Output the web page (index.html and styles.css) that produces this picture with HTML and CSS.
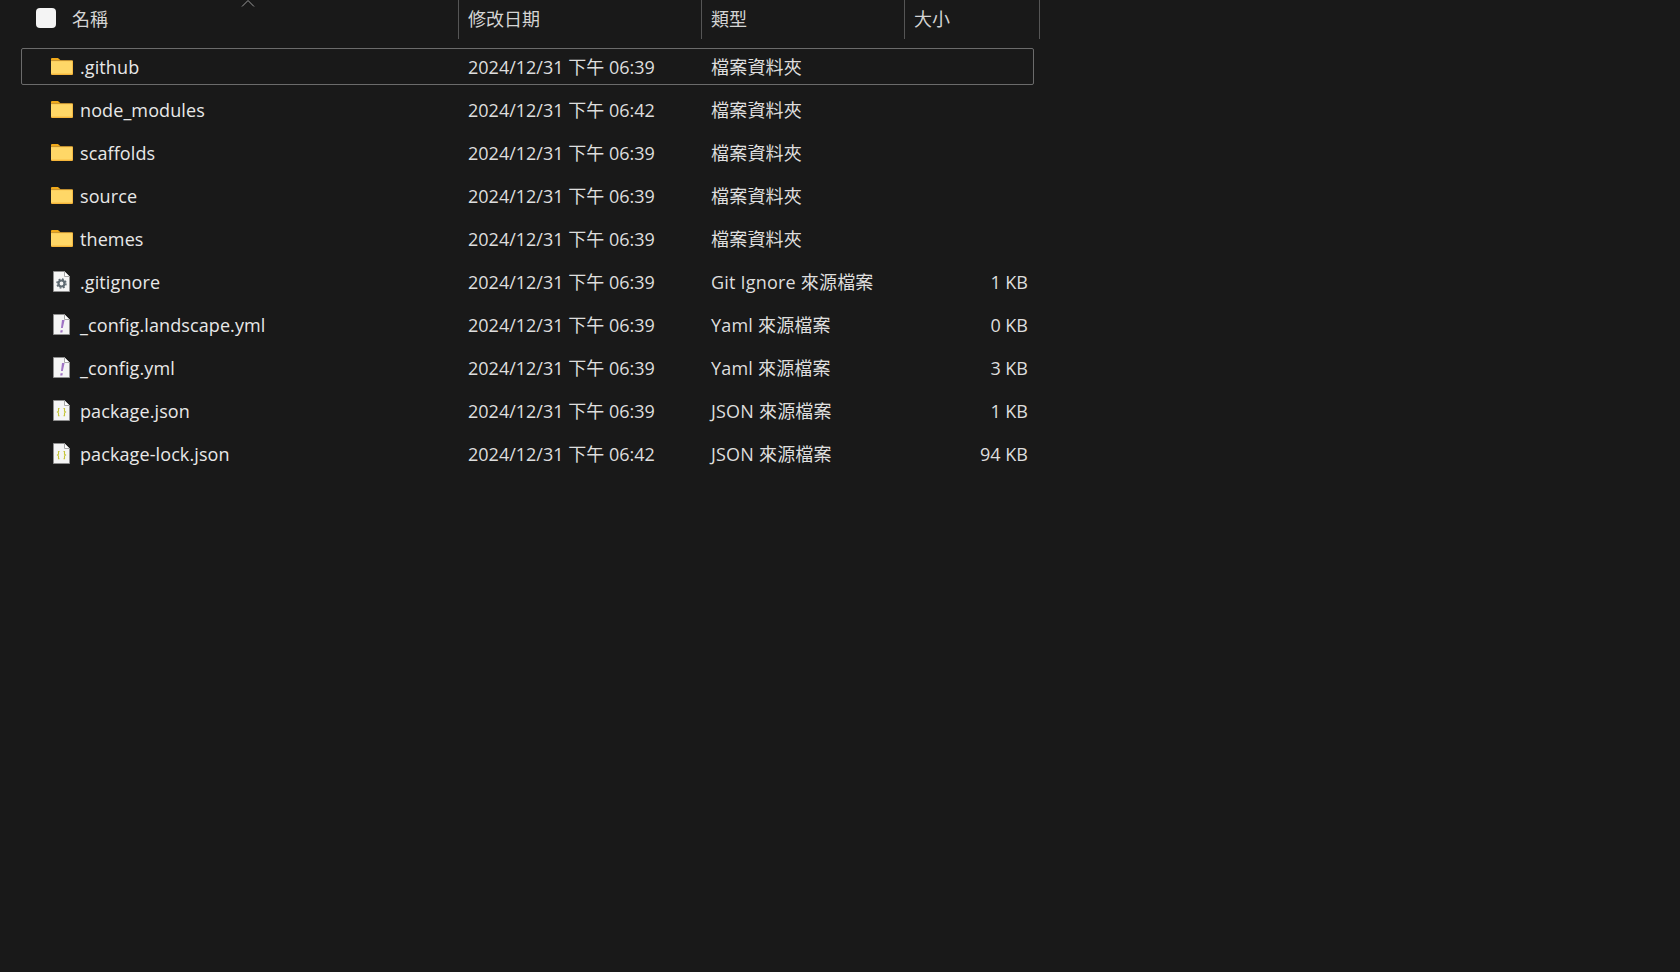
FILE: index.html
```html
<!DOCTYPE html>
<html lang="zh-Hant">
<head>
<meta charset="utf-8">
<title>檔案總管</title>
<link rel="stylesheet" href="styles.css">
</head>
<body>
<svg class="defs" width="0" height="0" aria-hidden="true">
  <symbol id="folder" viewBox="0 0 22 18">
    <path d="M0 2a1 1 0 0 1 1-1h6l2.500 2.200H0z" fill="#f0a91a"/>
    <path d="M0 3.200h21a1 1 0 0 1 1 1V17a1 1 0 0 1-1 1H1a1 1 0 0 1-1-1z" fill="#f5b53a"/>
    <path d="M0 4.200h21.200V16.600H0z" fill="#ffd767"/>
  </symbol>
  <symbol id="page" viewBox="0 0 17 21">
    <path d="M.5.500h11l5 5v15H.5z" fill="#f5f5f5" stroke="#8f8f8f"/>
    <path d="M11.500.500v5h5" fill="#fff" stroke="#a8a8a8"/>
  </symbol>
</svg>
<main class="explorer">
  <header class="head">
    <svg class="sort" width="14" height="7" viewBox="0 0 14 7"><path d="M1 6.500l6-6 6 6" fill="none" stroke="#9a9a9a"/></svg>
    <div class="hcell hname"><span class="check"></span><span>名稱</span></div>
    <div class="hcell">修改日期</div>
    <div class="hcell">類型</div>
    <div class="hcell">大小</div>
  </header>
  <ul class="list">
    <li class="row selected">
      <span class="name"><svg class="ico"><use href="#folder"/></svg>.github</span>
      <span class="date">2024/12/31 下午 06:39</span><span class="type">檔案資料夾</span><span class="size"></span>
    </li>
    <li class="row">
      <span class="name"><svg class="ico"><use href="#folder"/></svg>node_modules</span>
      <span class="date">2024/12/31 下午 06:42</span><span class="type">檔案資料夾</span><span class="size"></span>
    </li>
    <li class="row">
      <span class="name"><svg class="ico"><use href="#folder"/></svg>scaffolds</span>
      <span class="date">2024/12/31 下午 06:39</span><span class="type">檔案資料夾</span><span class="size"></span>
    </li>
    <li class="row">
      <span class="name"><svg class="ico"><use href="#folder"/></svg>source</span>
      <span class="date">2024/12/31 下午 06:39</span><span class="type">檔案資料夾</span><span class="size"></span>
    </li>
    <li class="row">
      <span class="name"><svg class="ico"><use href="#folder"/></svg>themes</span>
      <span class="date">2024/12/31 下午 06:39</span><span class="type">檔案資料夾</span><span class="size"></span>
    </li>
    <li class="row">
      <span class="name">
        <svg class="ico file" viewBox="0 0 17 21"><use href="#page" width="17" height="21"/>
          <circle cx="8.500" cy="12.500" r="3" fill="none" stroke="#5f6b73" stroke-width="2.200"/>
          <circle cx="8.500" cy="12.500" r="4.500" fill="none" stroke="#5f6b73" stroke-width="1.500" stroke-dasharray="1.800 1.730"/>
        </svg>.gitignore</span>
      <span class="date">2024/12/31 下午 06:39</span><span class="type">Git Ignore 來源檔案</span><span class="size">1 KB</span>
    </li>
    <li class="row">
      <span class="name">
        <svg class="ico file" viewBox="0 0 17 21"><use href="#page" width="17" height="21"/>
          <path d="M9 6h2.600l-1.800 8H8zM7.600 16.200h2.200l-.4 2.300H7.200z" fill="#a074c4"/>
        </svg>_config.landscape.yml</span>
      <span class="date">2024/12/31 下午 06:39</span><span class="type">Yaml 來源檔案</span><span class="size">0 KB</span>
    </li>
    <li class="row">
      <span class="name">
        <svg class="ico file" viewBox="0 0 17 21"><use href="#page" width="17" height="21"/>
          <path d="M9 6h2.600l-1.800 8H8zM7.600 16.200h2.200l-.4 2.300H7.200z" fill="#a074c4"/>
        </svg>_config.yml</span>
      <span class="date">2024/12/31 下午 06:39</span><span class="type">Yaml 來源檔案</span><span class="size">3 KB</span>
    </li>
    <li class="row">
      <span class="name">
        <svg class="ico file" viewBox="0 0 17 21"><use href="#page" width="17" height="21"/>
          <path d="M6.500 8.500h-1v2.800l-1 .8 1 .8v2.800h1M10.500 8.500h1v2.800l1 .8-1 .8v2.800h-1" fill="none" stroke="#c5c53a" stroke-width="1.100"/>
        </svg>package.json</span>
      <span class="date">2024/12/31 下午 06:39</span><span class="type">JSON 來源檔案</span><span class="size">1 KB</span>
    </li>
    <li class="row">
      <span class="name">
        <svg class="ico file" viewBox="0 0 17 21"><use href="#page" width="17" height="21"/>
          <path d="M6.500 8.500h-1v2.800l-1 .8 1 .8v2.800h1M10.500 8.500h1v2.800l1 .8-1 .8v2.800h-1" fill="none" stroke="#c5c53a" stroke-width="1.100"/>
        </svg>package-lock.json</span>
      <span class="date">2024/12/31 下午 06:42</span><span class="type">JSON 來源檔案</span><span class="size">94 KB</span>
    </li>
  </ul>
</main>
</body>
</html>
```
FILE: styles.css
```css
* { box-sizing: border-box; }
html, body { margin: 0; height: 100%; }
body {
  background: #191919;
  color: #dedede;
  font-family: "Open Sans", "Noto Sans CJK TC", sans-serif;
  font-size: 18px;
  overflow: hidden;
}
.defs { display: block; height: 0; }
.explorer { width: 1040px; }
.head {
  position: relative;
  display: grid;
  grid-template-columns: 459px 243px 203px 135px;
  height: 39px;
}
.sort { position: absolute; left: 241px; top: 0; }
.hcell {
  display: flex;
  align-items: center;
  gap: 16px;
  padding: 0 0 3px 9px;
  border-right: 1px solid #555;
  color: #d4d4d4;
}
.hname { padding-left: 36px; }
.check {
  width: 20px;
  height: 20px;
  border-radius: 4px;
  background: #f4f4f4;
}
.list { list-style: none; margin: 9px 0 0 21px; padding: 0; width: 1013px; }
.row {
  display: grid;
  grid-template-columns: 446px 243px 204px 113px;
  align-items: center;
  height: 37px;
  margin-bottom: 6px;
  border: 1px solid transparent;
  border-radius: 2px;
}
.selected { border-color: #6b6b6b; }
.name { display: flex; align-items: center; padding-left: 29px; color: #e8e8e8; letter-spacing: .1px; }
.ico { width: 22px; height: 18px; margin: 0 7px 2px 0; flex: none; }
.file { width: 17px; height: 21px; margin: 0 10px 0 2px; }
.date, .type { padding-bottom: 2px; }
.type { letter-spacing: .2px; }
.size { text-align: right; }
```
